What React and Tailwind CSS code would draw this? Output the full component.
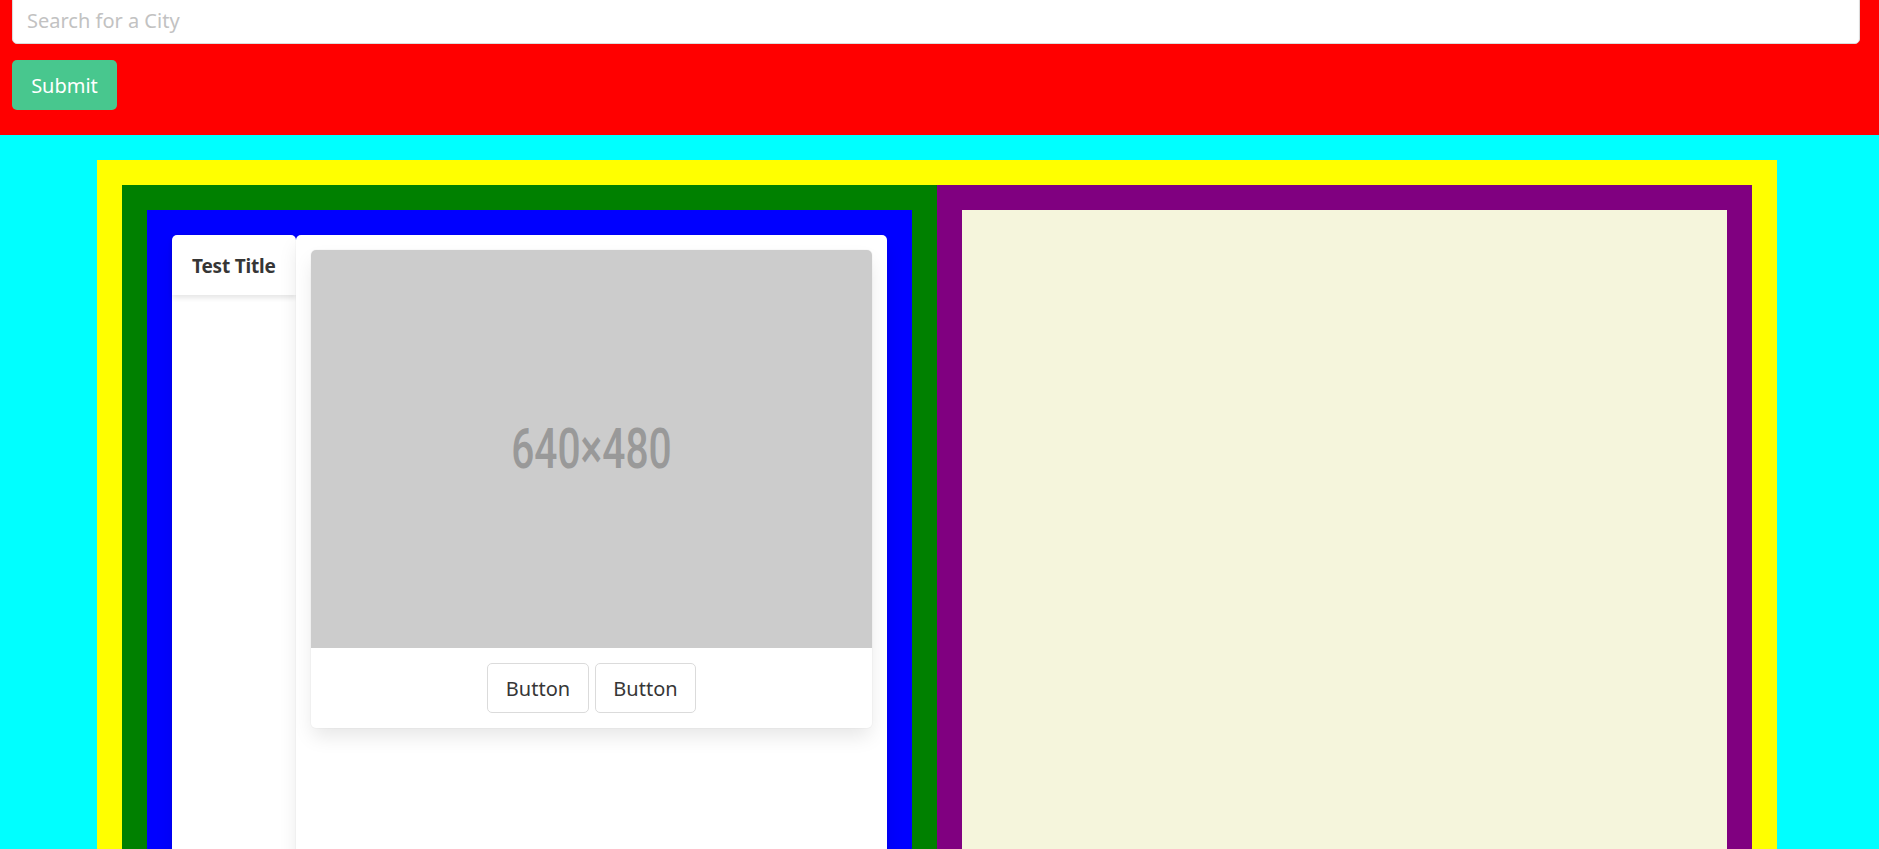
export default function App() {
  const font = { fontFamily: '"Noto Sans", "Open Sans", Arial, sans-serif' };

  return (
    <div className="min-h-screen bg-[#00ffff] pb-10" style={font}>
      <div className="bg-[#ff0000] pl-3 pr-[19px] pb-[25px]">
        <input
          className="mt-[-6px] block h-[50px] w-full rounded-[5px] border border-[#dbdbdb] bg-white px-[14px] pt-[3px] text-[20px] text-[#363636] shadow-[inset_0_1px_2px_rgba(10,10,10,0.05)] outline-none placeholder:text-[#c2c2c2]"
          placeholder="Search for a City"
          type="text"
        />
        <button
          className="mt-4 h-[50px] w-[105px] rounded-[5px] bg-[#48c78e] pt-[2px] text-[20px] text-white"
          type="button"
        >
          Submit
        </button>
      </div>

      <div className="pt-[25px] pl-[97px]">
        <div className="w-[1680px] bg-[#ffff00] px-[25px] pt-[25px]">
          <div className="flex bg-[#008000]">
            <div className="w-1/2 px-[25px] pt-[25px]">
              <div className="flex bg-[#0000ff] px-[25px] pt-[25px]">
                <div className="h-[820px] w-[124px] shrink-0 rounded-t-[5px] bg-white shadow-[0_10px_20px_-2.5px_rgba(10,10,10,0.1),0_0_0_1px_rgba(10,10,10,0.02)]">
                  <div className="whitespace-nowrap rounded-t-[5px] px-5 pt-[16px] pb-[14px] text-[19px] leading-[30px] font-bold tracking-[-0.2px] text-[#363636] shadow-[0_2.5px_5px_rgba(10,10,10,0.1)]">
                    Test Title
                  </div>
                </div>
                <div className="h-[820px] flex-1 rounded-t-[5px] bg-white p-[15px] shadow-[0_10px_20px_-2.5px_rgba(10,10,10,0.1),0_0_0_1px_rgba(10,10,10,0.02)]">
                  <div className="rounded-[5px] bg-white shadow-[0_10px_20px_-2.5px_rgba(10,10,10,0.1),0_0_0_1px_rgba(10,10,10,0.02)]">
                    <div className="flex h-[398px] items-center justify-center rounded-t-[5px] bg-[#cccccc]">
                      <span
                        className="inline-block scale-x-[0.74] text-[55px] leading-none font-medium text-[#999999]"
                        style={{ fontFamily: "Roboto, Arial, sans-serif" }}
                      >
                        640×480
                      </span>
                    </div>
                    <div className="flex h-[80px] items-center justify-center gap-[6px] pb-px">
                      <button
                        className="h-[50px] w-[102px] rounded-[5px] border border-[#dbdbdb] bg-white pt-[2px] text-[20px] text-[#363636]"
                        type="button"
                      >
                        Button
                      </button>
                      <button
                        className="h-[50px] w-[101px] rounded-[5px] border border-[#dbdbdb] bg-white pt-[2px] text-[20px] text-[#363636]"
                        type="button"
                      >
                        Button
                      </button>
                    </div>
                  </div>
                </div>
              </div>
            </div>
            <div className="w-1/2 bg-[#800080] px-[25px] pt-[25px]">
              <div className="h-[845px] bg-[#f5f5dc]" />
            </div>
          </div>
        </div>
      </div>
    </div>
  );
}
